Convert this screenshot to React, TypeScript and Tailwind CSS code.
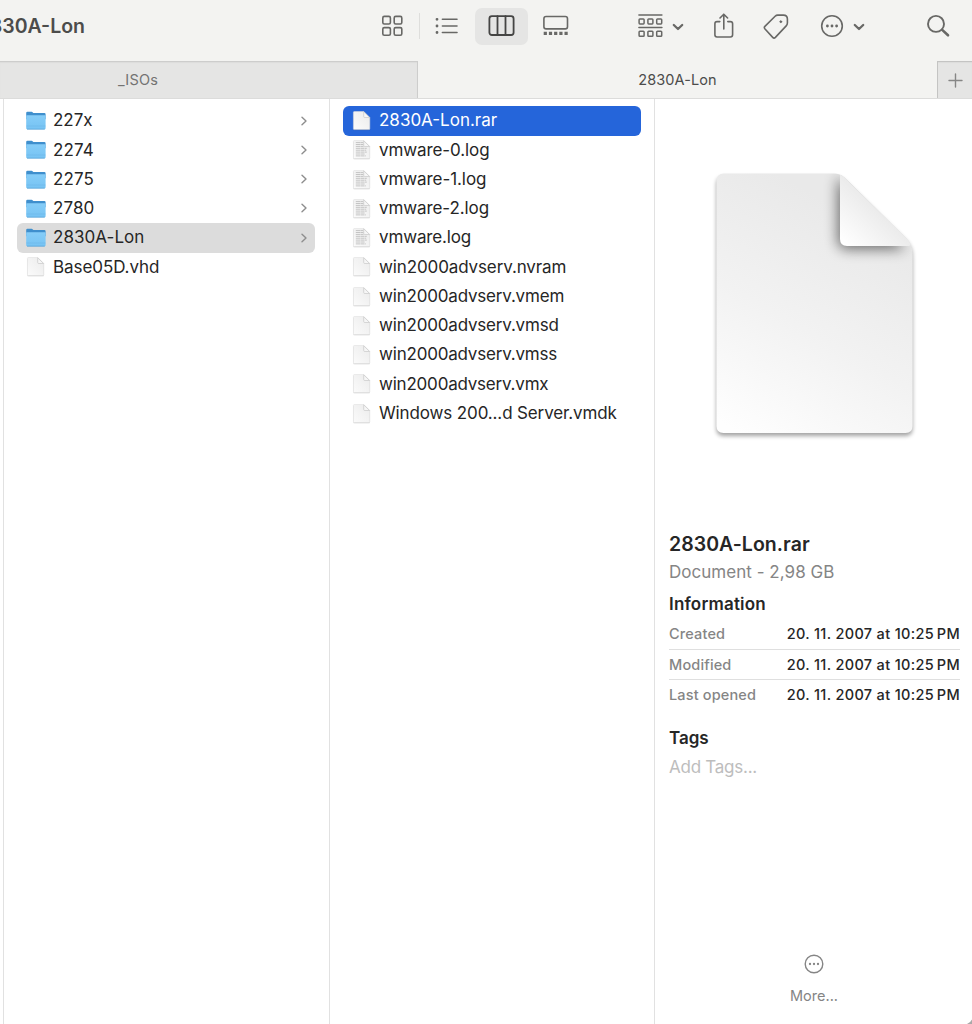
import type { ReactNode } from "react"
import clsx from "clsx"

type Kind = 'folder' | 'blank' | 'text'
type Item = { name: string; kind: Kind; tracking?: string }

const folders: Item[] = [
  { name: '227x', kind: 'folder' },
  { name: '2274', kind: 'folder', tracking: 'tracking-[0.1px]' },
  { name: '2275', kind: 'folder', tracking: 'tracking-[0.1px]' },
  { name: '2780', kind: 'folder', tracking: 'tracking-[0.1px]' },
  { name: '2830A-Lon', kind: 'folder', tracking: 'tracking-[0.05px]' },
  { name: 'Base05D.vhd', kind: 'blank', tracking: 'tracking-[-0.08px]' },
]

const files: Item[] = [
  { name: '2830A-Lon.rar', kind: 'blank' },
  { name: 'vmware-0.log', kind: 'text', tracking: 'tracking-[-0.1px]' },
  { name: 'vmware-1.log', kind: 'text', tracking: 'tracking-[-0.08px]' },
  { name: 'vmware-2.log', kind: 'text', tracking: 'tracking-[-0.1px]' },
  { name: 'vmware.log', kind: 'text', tracking: 'tracking-[-0.15px]' },
  { name: 'win2000advserv.nvram', kind: 'blank', tracking: 'tracking-[-0.12px]' },
  { name: 'win2000advserv.vmem', kind: 'blank', tracking: 'tracking-[-0.19px]' },
  { name: 'win2000advserv.vmsd', kind: 'blank', tracking: 'tracking-[-0.19px]' },
  { name: 'win2000advserv.vmss', kind: 'blank', tracking: 'tracking-[-0.2px]' },
  { name: 'win2000advserv.vmx', kind: 'blank', tracking: 'tracking-[-0.21px]' },
  { name: 'Windows 200...d Server.vmdk', kind: 'blank', tracking: 'tracking-[-0.13px]' },
]

// thin space before PM, same as the system date format
const stamp = '20. 11. 2007 at 10:25\u2009PM'

const info = [
  { label: 'Created', value: stamp },
  { label: 'Modified', value: stamp },
  { label: 'Last opened', value: stamp },
]

function Icon({ w, h = 30, sw = 1.6, className, children }: { w: number; h?: number; sw?: number; className?: string; children: ReactNode }) {
  return (
    <svg width={w} height={h} viewBox={`0 0 ${w} ${h}`} fill="none" stroke="currentColor" strokeWidth={sw}
      strokeLinecap="round" strokeLinejoin="round" className={clsx('shrink-0', className)}>
      {children}
    </svg>
  )
}

function Chevron({ className }: { className?: string }) {
  return (
    <Icon w={12} sw={2.3} className={className}>
      <path d="M1.8 14 L6 18 L10.2 14" />
    </Icon>
  )
}

function FolderIcon() {
  return (
    <svg width="22" height="22" viewBox="0 0 22 22" className="shrink-0">
      <path d="M1.2 3 q0-1.2 1.2-1.2 h4.2 q.7 0 1.2 .6 l.6 .6 h11 q1.2 0 1.2 1.2 v5 H1.2z" fill="#3f8fcd" />
      <path d="M1.2 5.8 q0-.6 .6-.6 h18.2 q.6 0 .6 .6 v12.4 q0 1.1-1.1 1.1 H2.3 q-1.1 0-1.1-1.1z" fill="url(#folder)" />
      <path d="M1.4 16 h19" stroke="#6db7e8" strokeWidth=".6" />
      <path d="M2 19.2 h17.8" stroke="#5aa5d8" strokeWidth=".8" />
    </svg>
  )
}

function FileIcon({ text }: { text?: boolean }) {
  return (
    <svg width="22" height="22" viewBox="0 0 22 22" className="shrink-0">
      <path d="M3.3 1.7 H12.8 L18.8 7.7 v11 q0 .9-.9 .9 H3.3 q-.9 0-.9-.9 V2.6 q0-.9 .9-.9z" fill="#000" opacity=".18" transform="translate(0 .7)" />
      <path d="M3.3 1.5 H12.8 L18.8 7.5 v11.2 q0 .9-.9 .9 H3.3 q-.9 0-.9-.9 V2.4 q0-.9 .9-.9z" fill="url(#page)" stroke="#dcdcdc" strokeWidth=".5" />
      {text && (
        <path d="M4.8 3.6 h7.4 M4.8 5.5 h7.8 M4.8 7.4 h7.8 M4.8 9.3 h11 M4.8 11.2 h10.4 M4.8 13.1 h11 M4.8 15 h9 M4.8 16.9 h10" stroke="#c4c4c4" strokeWidth="1" strokeDasharray="4.2 .4" />
      )}
      <path d="M12.7 1.8 v4.7 q0 1 1 1 H18.6z" fill="#f6f6f6" stroke="#c9c9c9" strokeWidth=".7" strokeLinejoin="round" />
    </svg>
  )
}

function Row({ item, state }: { item: Item; state?: 'blue' | 'gray' }) {
  return (
    <div className={clsx(
      'flex h-[29.28px] items-center rounded-[6px] pl-2 pr-[6px]',
      state === 'blue' && 'bg-[#2565da] text-white',
      state === 'gray' && 'bg-[#dcdcdc]',
    )}>
      {item.kind === 'folder' ? <FolderIcon /> : <FileIcon text={item.kind === 'text'} />}
      <span className={clsx('ml-[6px] flex-1 whitespace-nowrap', item.tracking)}>{item.name}</span>
      {item.kind === 'folder' && (
        <Icon w={10} h={12} sw={1.4} className="mb-[1px] text-[#8e8e8e]">
          <path d="M3 2.2 L7 6 L3 9.8" />
        </Icon>
      )}
    </div>
  )
}

function Toolbar() {
  return (
    <div className="flex h-[61px] items-center overflow-hidden pb-[9px] text-[#686866]">
      <div className="flex w-[85px] shrink-0 justify-end overflow-hidden whitespace-nowrap pt-[2px] text-[19.5px] font-semibold text-[#4c4c4b]">2830A-Lon</div>
      <Icon w={22} className="ml-[296px]">
        <rect x="1.8" y="5.4" width="7.6" height="7.6" rx="1.5" />
        <rect x="13.2" y="5.4" width="7.6" height="7.6" rx="1.5" />
        <rect x="1.8" y="16.6" width="7.6" height="7.6" rx="1.5" />
        <rect x="13.2" y="16.6" width="7.6" height="7.6" rx="1.5" />
      </Icon>
      <div className="ml-4 h-[26px] w-px bg-[#dededc]" />
      <Icon w={24} className="ml-[15px]">
        <path d="M7.4 8.3 H22 M7.4 15 H22 M7.4 21.5 H22" />
        <path d="M2 8.3 h.01 M2 15 h.01 M2 21.5 h.01" strokeWidth="2.8" />
      </Icon>
      <div className="ml-4 flex h-[37px] w-[53px] items-center justify-center rounded-[7px] bg-[#e5e5e4] text-[#454544]">
        <Icon w={27} sw={1.8}>
          <rect x="1.4" y="5.2" width="24.2" height="18.8" rx="2.5" />
          <path d="M9.5 5.2 V24 M17.5 5.2 V24" />
        </Icon>
      </div>
      <Icon w={26} className="ml-[15px]">
        <rect x=".9" y="5.5" width="23.6" height="12.4" rx="2.2" />
        <path d="M.7 22.4 h3.2 M5.9 22.4 h3.2 M11.1 22.4 h3.2 M16.3 22.4 h3.2 M21.5 22.4 h3.2" strokeWidth="3.2" strokeLinecap="butt" />
      </Icon>
      <Icon w={25} className="ml-[69px]" sw={1.5}>
        <path d="M.9 4 H23.9 M.9 16.5 H23.9" />
        <rect x="1.1" y="7.9" width="5" height="5" rx=".8" />
        <rect x="9.9" y="7.9" width="5" height="5" rx=".8" />
        <rect x="18.7" y="7.9" width="5" height="5" rx=".8" />
        <rect x="1.1" y="20.3" width="5" height="5" rx=".8" />
        <rect x="9.9" y="20.3" width="5" height="5" rx=".8" />
        <rect x="18.7" y="20.3" width="5" height="5" rx=".8" />
      </Icon>
      <Chevron className="ml-[9px]" />
      <Icon w={22} className="ml-[29px]">
        <path d="M6.8 10.6 H4 Q1.9 10.6 1.9 12.7 V23.8 Q1.9 26 4 26 H17.4 Q19.6 26 19.6 23.8 V12.7 Q19.6 10.6 17.4 10.6 H14.8" />
        <path d="M10.8 18 V3.4 M7 7 L10.8 3.2 L14.6 7" />
      </Icon>
      <Icon w={28} className="ml-[28px]">
        <path d="M1.8 17.7 Q.8 16.5 1.9 15.4 L12.1 5.2 Q13.2 4.1 14.8 4.1 H20.4 Q24.4 4.1 24.4 8 V12 Q24.4 13.6 23.2 14.9 L12.4 26.4 Q11 27.8 9.7 26.4 Z" />
        <circle cx="17.8" cy="10.7" r=".9" fill="currentColor" strokeWidth="1" />
      </Icon>
      <Icon w={24} className="ml-[29px]">
        <circle cx="12" cy="15" r="10.3" />
        <path d="M7.4 15 h.01 M12 15 h.01 M16.6 15 h.01" strokeWidth="2.8" />
      </Icon>
      <Chevron className="ml-[9px]" />
      <Icon w={25} className="ml-[61px]" sw={1.9}>
        <circle cx="10" cy="12.9" r="8" />
        <path d="M16.2 18.9 L22 24.3" strokeWidth="2.6" />
      </Icon>
    </div>
  )
}

function TabBar() {
  return (
    <div className="flex h-[38px] border-b border-[#dcdcdb] text-[14.5px]">
      <div className="flex w-[418px] items-center border-r border-t border-[#cdcdcc] bg-[#e5e5e4] pl-[118px] tracking-[0.2px] text-[#737372] shadow-[inset_0_1px_1px_#dcdcdb]">_ISOs</div>
      <div className="flex w-[519px] items-center justify-center tracking-[0.1px] text-[#4c4c4b]">2830A-Lon</div>
      <div className="flex flex-1 items-center border-l border-t border-[#c4c4c3] bg-[#e5e5e4] pl-[10px] text-[#868685] shadow-[inset_0_1px_1px_#dcdcdb]">
        <Icon w={15} h={15} sw={1.4}>
          <path d="M7.5 1 V14 M1 7.5 H14" />
        </Icon>
      </div>
    </div>
  )
}

function BigPage() {
  return (
    <svg width="220" height="290" viewBox="704 160 220 290" className="mx-auto">
      <defs>
        <linearGradient id="big" gradientUnits="userSpaceOnUse" x1="740" y1="433" x2="860" y2="220">
          <stop offset="0" stopColor="#fefefe" />
          <stop offset=".5" stopColor="#f2f2f2" />
          <stop offset="1" stopColor="#e9e9e9" />
        </linearGradient>
        <linearGradient id="curl" gradientUnits="userSpaceOnUse" x1="843" y1="243" x2="876" y2="208">
          <stop offset="0" stopColor="#ffffff" />
          <stop offset="1" stopColor="#ebebeb" />
        </linearGradient>
        <filter id="soft" x="-50%" y="-50%" width="200%" height="200%"><feGaussianBlur stdDeviation="7" /></filter>
        <filter id="drop" x="-10%" y="-10%" width="120%" height="120%"><feGaussianBlur stdDeviation="2" /></filter>
        <clipPath id="sheet">
          <path d="M724 173.5 H834 Q840 173.5 844.5 177.5 L907 239 Q912.5 244.5 912.5 254 V426 Q912.5 433 905.5 433 H723.5 Q716.5 433 716.5 426 V181 Q716.5 173.5 724 173.5Z" />
        </clipPath>
      </defs>
      <path d="M724 174 H834 Q840 174 844.5 178 L907 239 Q912.5 244.5 912.5 254 V426 Q912.5 433 905.5 433 H723.5 Q716.5 433 716.5 426 V181 Q716.5 174 724 174Z" fill="#000" opacity=".36" filter="url(#drop)" transform="translate(0 3)" />
      <g clipPath="url(#sheet)">
        <rect x="716" y="173" width="197" height="261" fill="url(#big)" />
        <path d="M838 176 V240 Q838 249 847 249 H906 Z" fill="#000" opacity=".55" filter="url(#soft)" />
        <path d="M840 172 V239 Q840 246 847 246 H909 L912 244 V172 Z" fill="url(#curl)" />
      </g>
    </svg>
  )
}

function Preview() {
  return (
    <div className="flex flex-1 flex-col overflow-hidden pl-[14px] pr-3">
      <div className="-mr-3 -ml-[13px] pt-[61px]">
        <BigPage />
      </div>
      <h1 className="mt-[81px] text-[19.5px] font-semibold leading-[26px] tracking-[0.05px] text-[#262626]">2830A-Lon.rar</h1>
      <p className="mt-[3px] text-[17px] leading-6 tracking-[0.03px] text-[#858585]">Document - 2,98 GB</p>
      <h2 className="mt-2 text-[17px] font-semibold leading-6 tracking-[0.18px] text-[#262626]">Information</h2>
      <div className="mt-[2.5px]">
        {info.map((row, i) => (
          <div key={row.label} className={clsx('flex h-[30.4px] items-center justify-between text-[14.5px] font-medium', i > 0 && 'border-t border-[#dfdfdf]')}>
            <span className="tracking-[0.15px] text-[#858585]">{row.label}</span>
            <span className="whitespace-nowrap tracking-[0.33px] text-[#262626]">{row.value}</span>
          </div>
        ))}
      </div>
      <h2 className="mt-[16px] text-[17px] font-semibold leading-6 text-[#262626]">Tags</h2>
      <p className="mt-[5.5px] text-[17px] leading-6 tracking-[-0.25px] text-[#bdbdbd]">Add Tags...</p>
      <div className="mt-auto mb-[18px] flex flex-col items-center pr-px text-[14.5px] leading-5 text-[#858585]">
        <Icon w={20} h={20} sw={1.4} className="mb-3">
          <circle cx="10" cy="10" r="8.8" />
          <path d="M6 10 h.01 M10 10 h.01 M14 10 h.01" strokeWidth="2.3" />
        </Icon>
        More...
      </div>
    </div>
  )
}

export default function App() {
  return (
    <div className="flex h-[1024px] w-[972px] flex-col overflow-hidden bg-[#f3f3f1] font-['Inter',sans-serif]">
      {/* gradients shared by the small list icons */}
      <svg width="0" height="0" className="absolute">
        <defs>
          <linearGradient id="folder" x1="0" y1="0" x2="0" y2="1">
            <stop offset="0" stopColor="#86cdf8" />
            <stop offset="1" stopColor="#76c3f3" />
          </linearGradient>
          <linearGradient id="page" x1="0" y1="1" x2="1" y2="0">
            <stop offset="0" stopColor="#fbfbfb" />
            <stop offset="1" stopColor="#ebebeb" />
          </linearGradient>
        </defs>
      </svg>
      <Toolbar />
      <TabBar />
      <div className="relative flex flex-1 overflow-hidden bg-white text-[17px] text-[#262626]">
        <div className="w-[330px] border-r border-[#e1e1e1] pl-[3px]">
          <div className="h-full border-l border-[#e1e1e1] pl-[13px] pr-[14px] pt-[7.4px]">
            {folders.map((item) => <Row key={item.name} item={item} state={item.name === '2830A-Lon' ? 'gray' : undefined} />)}
          </div>
        </div>
        <div className="w-[325px] border-r border-[#e1e1e1] pl-[13px] pr-[13px] pt-[7.4px]">
          {files.map((item, i) => <Row key={item.name} item={item} state={i === 0 ? 'blue' : undefined} />)}
        </div>
        <Preview />
        {/* rounded window corner */}
        <svg width="6" height="6" viewBox="0 0 6 6" className="absolute bottom-0 right-0">
          <path d="M6 1.5 Q4.5 4.5 1 6 H6z" fill="#a9a9a9" />
        </svg>
      </div>
    </div>
  )
}
